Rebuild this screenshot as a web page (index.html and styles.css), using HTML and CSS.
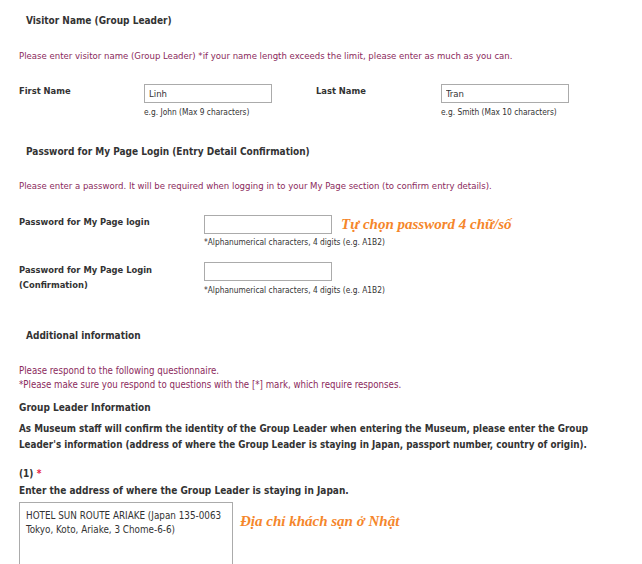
FILE: index.html
```html
<html>
<head>
    <title>Entry Form</title>
    <link rel="stylesheet" href="styles.css">
</head>
<body>
<div class="form">

    <h3 class="sec-title">Visitor Name (Group Leader)</h3>
    <p class="note note-1">Please enter visitor name (Group Leader) *if your name length exceeds the limit, please enter as much as you can.</p>

    <div class="name-row">
        <label class="lbl">First Name</label>
        <div class="field">
            <input type="text" class="txt" value="Linh">
            <div class="hint">e.g. John (Max 9 characters)</div>
        </div>
        <label class="lbl">Last Name</label>
        <div class="field">
            <input type="text" class="txt" value="Tran">
            <div class="hint">e.g. Smith (Max 10 characters)</div>
        </div>
    </div>

    <h3 class="sec-title sec-2">Password for My Page Login (Entry Detail Confirmation)</h3>
    <p class="note note-2">Please enter a password. It will be required when logging in to your My Page section (to confirm entry details).</p>

    <div class="pw-row pw-1">
        <label class="lbl">Password for My Page login</label>
        <div class="field">
            <div class="with-memo">
                <input type="password" class="txt">
                <span class="memo">Tự chọn password 4 chữ/số</span>
            </div>
            <div class="hint">*Alphanumerical characters, 4 digits (e.g. A1B2)</div>
        </div>
    </div>

    <div class="pw-row pw-2">
        <label class="lbl lbl-2">Password for My Page Login<br>(Confirmation)</label>
        <div class="field">
            <input type="password" class="txt">
            <div class="hint">*Alphanumerical characters, 4 digits (e.g. A1B2)</div>
        </div>
    </div>

    <h3 class="sec-title sec-3">Additional information</h3>
    <p class="note note-3">Please respond to the following questionnaire.<br>*Please make sure you respond to questions with the [*] mark, which require responses.</p>

    <h4 class="group-title">Group Leader Information</h4>
    <p class="lead">As Museum staff will confirm the identity of the Group Leader when entering the Museum, please enter the Group Leader's information (address of where the Group Leader is staying in Japan, passport number, country of origin).</p>

    <div class="q-num">(1) <span class="req">*</span></div>
    <div class="q-text">Enter the address of where the Group Leader is staying in Japan.</div>
    <div class="with-memo addr">
        <textarea class="area">HOTEL SUN ROUTE ARIAKE (Japan 135-0063
Tokyo, Koto, Ariake, 3 Chome-6-6)</textarea>
        <span class="memo memo-addr">Địa chỉ khách sạn ở Nhật</span>
    </div>

</div>
</body>
</html>
```

FILE: styles.css
```css
body {
    margin: 0;
    background: #fff;
    font-family: "DejaVu Sans Condensed", "DejaVu Sans", sans-serif;
    color: #333;
}

.form {
    width: 590px;
    padding: 13px 0 0 19px;
}

.sec-title {
    margin: 0 0 0 7px;
    font-size: 10px;
    line-height: 16px;
    font-weight: bold;
}
.sec-2 { margin-top: 26px; }
.sec-3 { margin-top: 32px; }

.note {
    margin: 20px 0 0;
    font-size: 9.5px;
    line-height: 14px;
    color: #8b2a5c;
}
.note-2 { margin-top: 19px; }
.note-3 { font-size: 9.6px; }

.lbl {
    font-size: 9.3px;
    font-weight: bold;
    line-height: 14px;
}

.name-row {
    display: grid;
    grid-template-columns: 125px 172px 125px 1fr;
    margin-top: 21px;
}

.txt {
    display: block;
    box-sizing: border-box;
    width: 128px;
    height: 19px;
    margin: 0;
    padding: 0 4px;
    border: 1px solid #ababab;
    font-family: inherit;
    font-size: 9.5px;
    color: #333;
}

.hint {
    margin-top: 3px;
    font-size: 8.3px;
    line-height: 12px;
}

.pw-row {
    display: grid;
    grid-template-columns: 185px 1fr;
}
.pw-1 { margin-top: 22px; }
.pw-2 { margin-top: 14px; }
.pw-1 .hint { margin-top: 2px; }
.lbl-2 { line-height: 15px; }

.with-memo {
    display: flex;
    align-items: center;
    gap: 9px;
}

.memo {
    font-family: "Liberation Serif", serif;
    font-style: italic;
    font-weight: bold;
    font-size: 15px;
    color: #f5862b;
}

.group-title {
    margin: 8px 0 0;
    font-size: 10px;
    line-height: 16px;
    font-weight: bold;
}

.lead {
    margin: 5px 0 0;
    font-size: 9.8px;
    line-height: 16px;
    font-weight: bold;
}

.q-num {
    margin-top: 13px;
    font-size: 10px;
    line-height: 16px;
    font-weight: bold;
}
.req { color: #e8254a; }

.q-text {
    margin-top: 1px;
    font-size: 10px;
    line-height: 16px;
    font-weight: bold;
}

.addr {
    margin-top: 3px;
    align-items: flex-start;
    gap: 7px;
}

.area {
    display: block;
    box-sizing: border-box;
    width: 214px;
    height: 80px;
    margin: 0;
    padding: 6px 6px;
    border: 1px solid #ababab;
    resize: none;
    font-family: inherit;
    font-size: 9.8px;
    line-height: 14px;
    color: #333;
}

.memo-addr { margin-top: 11px; }
```
